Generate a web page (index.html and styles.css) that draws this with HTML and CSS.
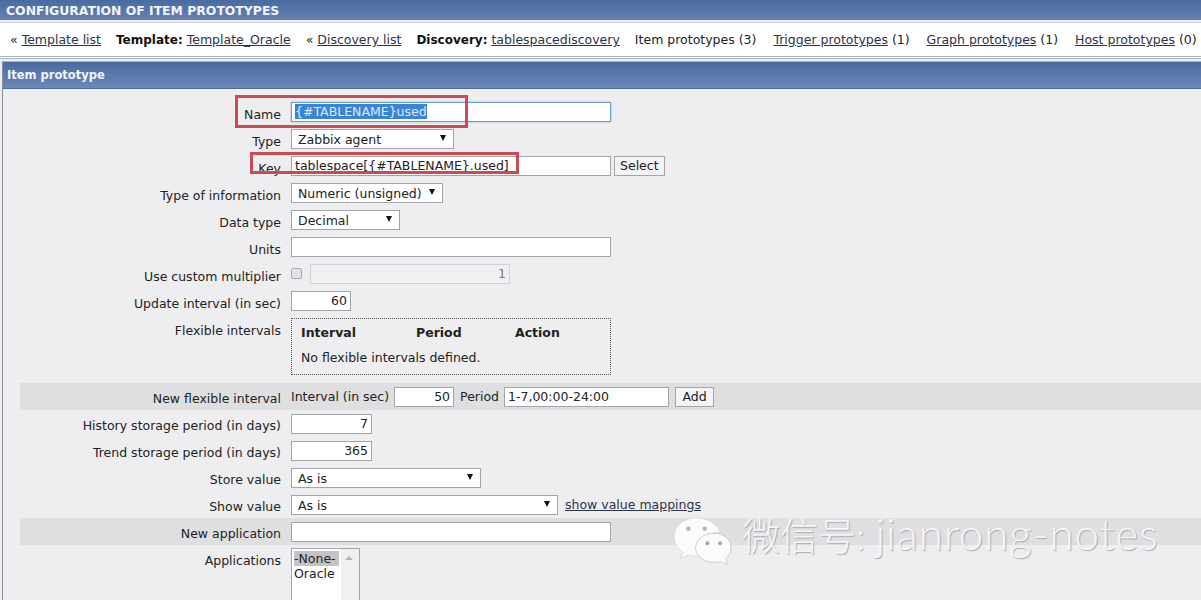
FILE: index.html
```html
<!DOCTYPE html>
<html lang="en">
<head>
  <meta charset="UTF-8">
  <title>Configuration of item prototypes</title>
  <link rel="stylesheet" href="styles.css">
</head>
<body>

<div class="page-title">CONFIGURATION OF ITEM PROTOTYPES</div>

<div class="breadcrumbs">
  <span>« <a href="#">Template list</a></span>
  <span><b>Template:</b> <a href="#">Template_Oracle</a></span>
  <span>« <a href="#">Discovery list</a></span>
  <span><b>Discovery:</b> <a href="#">tablespacediscovery</a></span>
  <span>Item prototypes (3)</span>
  <span class="crumb-wide"><a href="#">Trigger prototypes</a> (1)</span>
  <span class="crumb-wide"><a href="#">Graph prototypes</a> (1)</span>
  <span class="crumb-wide"><a href="#">Host prototypes</a> (0)</span>
</div>

<div class="panel">
  <div class="panel-title">Item prototype</div>
  <form class="form">
    <div class="row">
      <label>Name</label>
      <div class="field"><div class="text-input focused w320"><span class="selected">{#TABLENAME}used</span></div></div>
    </div>
    <div class="row">
      <label>Type</label>
      <div class="field"><div class="select w163">Zabbix agent</div></div>
    </div>
    <div class="row">
      <label>Key</label>
      <div class="field field-tight">
        <input class="w320" type="text" value="tablespace[{#TABLENAME}.used]">
        <button type="button">Select</button>
      </div>
    </div>
    <div class="row">
      <label>Type of information</label>
      <div class="field"><div class="select w152">Numeric (unsigned)</div></div>
    </div>
    <div class="row">
      <label>Data type</label>
      <div class="field"><div class="select w109">Decimal</div></div>
    </div>
    <div class="row">
      <label>Units</label>
      <div class="field"><input class="w320" type="text"></div>
    </div>
    <div class="row">
      <label>Use custom multiplier</label>
      <div class="field">
        <span class="checkbox"></span>
        <input class="w200 num disabled" type="text" value="1" disabled>
      </div>
    </div>
    <div class="row">
      <label>Update interval (in sec)</label>
      <div class="field"><input class="w60 num" type="text" value="60"></div>
    </div>
    <div class="row row-top row-intervals">
      <label>Flexible intervals</label>
      <div class="field">
        <div class="intervals">
          <div class="intervals-head"><b>Interval</b><b>Period</b><b>Action</b></div>
          <div>No flexible intervals defined.</div>
        </div>
      </div>
    </div>
    <div class="row band">
      <label>New flexible interval</label>
      <div class="field field-band">
        <span>Interval (in sec)</span>
        <input class="w60 num" type="text" value="50">
        <span class="period-label">Period</span>
        <input class="w165" type="text" value="1-7,00:00-24:00">
        <button type="button">Add</button>
      </div>
    </div>
    <div class="row">
      <label>History storage period (in days)</label>
      <div class="field"><input class="w81 num" type="text" value="7"></div>
    </div>
    <div class="row">
      <label>Trend storage period (in days)</label>
      <div class="field"><input class="w81 num" type="text" value="365"></div>
    </div>
    <div class="row">
      <label>Store value</label>
      <div class="field"><div class="select w190">As is</div></div>
    </div>
    <div class="row">
      <label>Show value</label>
      <div class="field">
        <div class="select w267">As is</div>
        <a href="#">show value mappings</a>
      </div>
    </div>
    <div class="row band">
      <label>New application</label>
      <div class="field"><input class="w320" type="text"></div>
    </div>
    <div class="row row-top row-apps">
      <label>Applications</label>
      <div class="field">
        <div class="listbox">
          <div class="listbox-items">
            <div class="option-selected">-None-</div>
            <div>Oracle</div>
          </div>
          <div class="listbox-scroll"><span class="scroll-up"></span></div>
        </div>
      </div>
    </div>
  </form>
</div>

<!-- red boxes drawn over the screenshot -->
<div class="mark mark-name"></div>
<div class="mark mark-key"></div>

<!-- watermark -->
<div class="watermark">
  <svg width="60" height="49" viewBox="0 0 66 54">
    <path d="M27 2C13 2 2 11 2 23c0 7 4 13 10 17l-3 7 9-4c3 1 6 1 9 1 1 0 2 0 3 0-1-3-1-5-1-7 0-11 10-19 23-19h1C50 9 39 2 27 2z" fill="#fbfbfc" stroke="#d8d8dc"/>
    <path d="M46 19c-11 0-20 7-20 16s9 16 20 16c2 0 5 0 7-1l8 4-2-7c4-3 6-7 6-12 0-9-8-16-19-16z" fill="#fbfbfc" stroke="#c9c9ce"/>
    <circle cx="18" cy="14" r="2.5" fill="#b5b5ba"/>
    <circle cx="36" cy="14" r="2.5" fill="#b5b5ba"/>
    <circle cx="39" cy="30" r="2.2" fill="#a5a5aa"/>
    <circle cx="53" cy="30" r="2.2" fill="#a5a5aa"/>
  </svg>
  <span class="watermark-text">微信号: <span class="watermark-latin">jianrong-notes</span></span>
</div>

</body>
</html>
```

FILE: styles.css
```css
html, body {
  height: 100%;
  overflow: hidden;
}

body {
  margin: 0;
  background-color: #eeeef1;
  color: #222;
  font-family: "DejaVu Sans", Verdana, sans-serif;
  font-size: 12.5px;
  position: relative;
}

a {
  color: #2b3348;
}

.page-title {
  height: 20px;
  line-height: 21px;
  padding-left: 6px;
  background: linear-gradient(#4a6aa2, #6581b0);
  color: #f2f5fa;
  font-weight: bold;
  font-size: 12.4px;
}

.breadcrumbs {
  display: flex;
  gap: 15px;
  height: 33px;
  align-items: center;
  padding-left: 10px;
  margin-top: 2px;
  background-color: #fff;
  border-top: 1px solid #c4cede;
  border-bottom: 3px double #a9b4c6;
  white-space: nowrap;
}

.breadcrumbs b {
  color: #111;
  font-size: 12px;
}

.crumb-wide {
  margin-left: 2px;
}

.panel {
  margin: 2px 0 0 2px;
  border-top: 1px solid #a9b4c6;
  border-left: 1px solid #8a8f99;
}

.panel-title {
  height: 26px;
  line-height: 27px;
  padding-left: 4px;
  background: linear-gradient(#4a6aa2, #6c88b6);
  border-bottom: 1px solid #4a6aa2;
  color: #f2f5fa;
  font-weight: bold;
  font-size: 11.5px;
}

.form {
  padding: 9px 0 0 17px;
}

.row {
  display: grid;
  grid-template-columns: 261px 1fr;
  column-gap: 10px;
  min-height: 27px;
  align-items: center;
}

.row label {
  text-align: right;
  padding-top: 5px;
}

.row-top {
  align-items: start;
}

.row-top label {
  padding-top: 9px;
}

.row-intervals {
  min-height: 69px;
}

.row-intervals .field {
  padding-top: 4px;
}

/* labels below the intervals box sit a little higher */
.row-intervals ~ .row label {
  padding-top: 3px;
}

.row-intervals ~ .row-apps label {
  padding-top: 8px;
}

.row-apps .field {
  padding-top: 3px;
}

.band {
  background-color: #dfdfe2;
}

.field {
  display: flex;
  align-items: center;
  gap: 7px;
}

.field-tight {
  gap: 3px;
}

.field-band {
  gap: 5px;
}

.field-band button {
  margin-left: 1px;
  padding: 0 6.5px;
}

.period-label {
  margin-left: 1px;
}

input, .text-input, .select {
  box-sizing: border-box;
  height: 20px;
  padding: 0 3px;
  border: 1px solid #a4a4a8;
  background-color: #fff;
  color: #222;
  font: inherit;
  margin: 0;
}

.text-input {
  line-height: 17px;
}

.focused {
  border-color: #6f9cc4;
  box-shadow: 0 0 2px #8fb6d8;
}

.selected {
  background-color: #3a84d8;
  color: #dbe9f8;
}

.num {
  text-align: right;
}

.disabled {
  background-color: #f0f0f2;
  border-color: #d0d0d4;
  color: #777;
}

.select {
  position: relative;
  line-height: 20px;
  padding-left: 6px;
}

.select::after {
  content: "";
  position: absolute;
  right: 7px;
  top: 5px;
  border-left: 3px solid transparent;
  border-right: 3px solid transparent;
  border-top: 6px solid #111;
}

button {
  height: 20px;
  padding: 0 5px;
  border: 1px solid #a4a4a8;
  background-color: #f4f4f6;
  color: #222;
  font: inherit;
  margin: 0;
}

.checkbox {
  width: 9px;
  height: 9px;
  margin-right: 1px;
  border: 1px solid #a8a8ac;
  border-radius: 2px;
  background-color: #e4e4e8;
}

.intervals {
  box-sizing: border-box;
  width: 320px;
  height: 57px;
  padding: 6px 9px;
  border: 1px dotted #555;
}

.intervals-head {
  display: grid;
  grid-template-columns: 115px 99px 1fr;
  margin-bottom: 10px;
}

.listbox {
  display: flex;
  box-sizing: border-box;
  width: 69px;
  height: 90px;
  border: 1px solid #a4a4a8;
  background-color: #fff;
}

.listbox-items {
  flex: 1;
  padding: 2px 2px;
  line-height: 15px;
}

.option-selected {
  background-color: #c4c4c6;
}

.listbox-scroll {
  width: 18px;
  background-color: #f0f0f2;
  position: relative;
}

.scroll-up {
  position: absolute;
  top: 7px;
  left: 4px;
  border-left: 4px solid transparent;
  border-right: 4px solid transparent;
  border-bottom: 4px solid #b4b4b8;
}

.mark {
  position: absolute;
  box-sizing: border-box;
  border: 3px solid #cc4a52;
}

.mark-name {
  left: 235px;
  top: 95px;
  width: 233px;
  height: 33px;
}

.mark-key {
  left: 250px;
  top: 152px;
  width: 269px;
  height: 22px;
}

.watermark {
  position: absolute;
  left: 672px;
  top: 516px;
  display: flex;
  align-items: flex-start;
  gap: 10px;
}

.watermark-text {
  margin-top: -3px;
  font-family: "Lato", "Noto Sans CJK SC", sans-serif;
  font-weight: 300;
  font-size: 38px;
  line-height: 40px;
  color: #f6f6f8;
  text-shadow: 1px 1px 1px #a8a8ae;
  white-space: nowrap;
}

.watermark-latin {
  font-size: 44px;
  letter-spacing: 0.8px;
}

.w60 { width: 60px; }
.w81 { width: 81px; }
.w109 { width: 109px; }
.w152 { width: 152px; }
.w163 { width: 163px; }
.w165 { width: 165px; }
.w190 { width: 190px; }
.w200 { width: 200px; }
.w267 { width: 267px; }
.w320 { width: 320px; }
```
